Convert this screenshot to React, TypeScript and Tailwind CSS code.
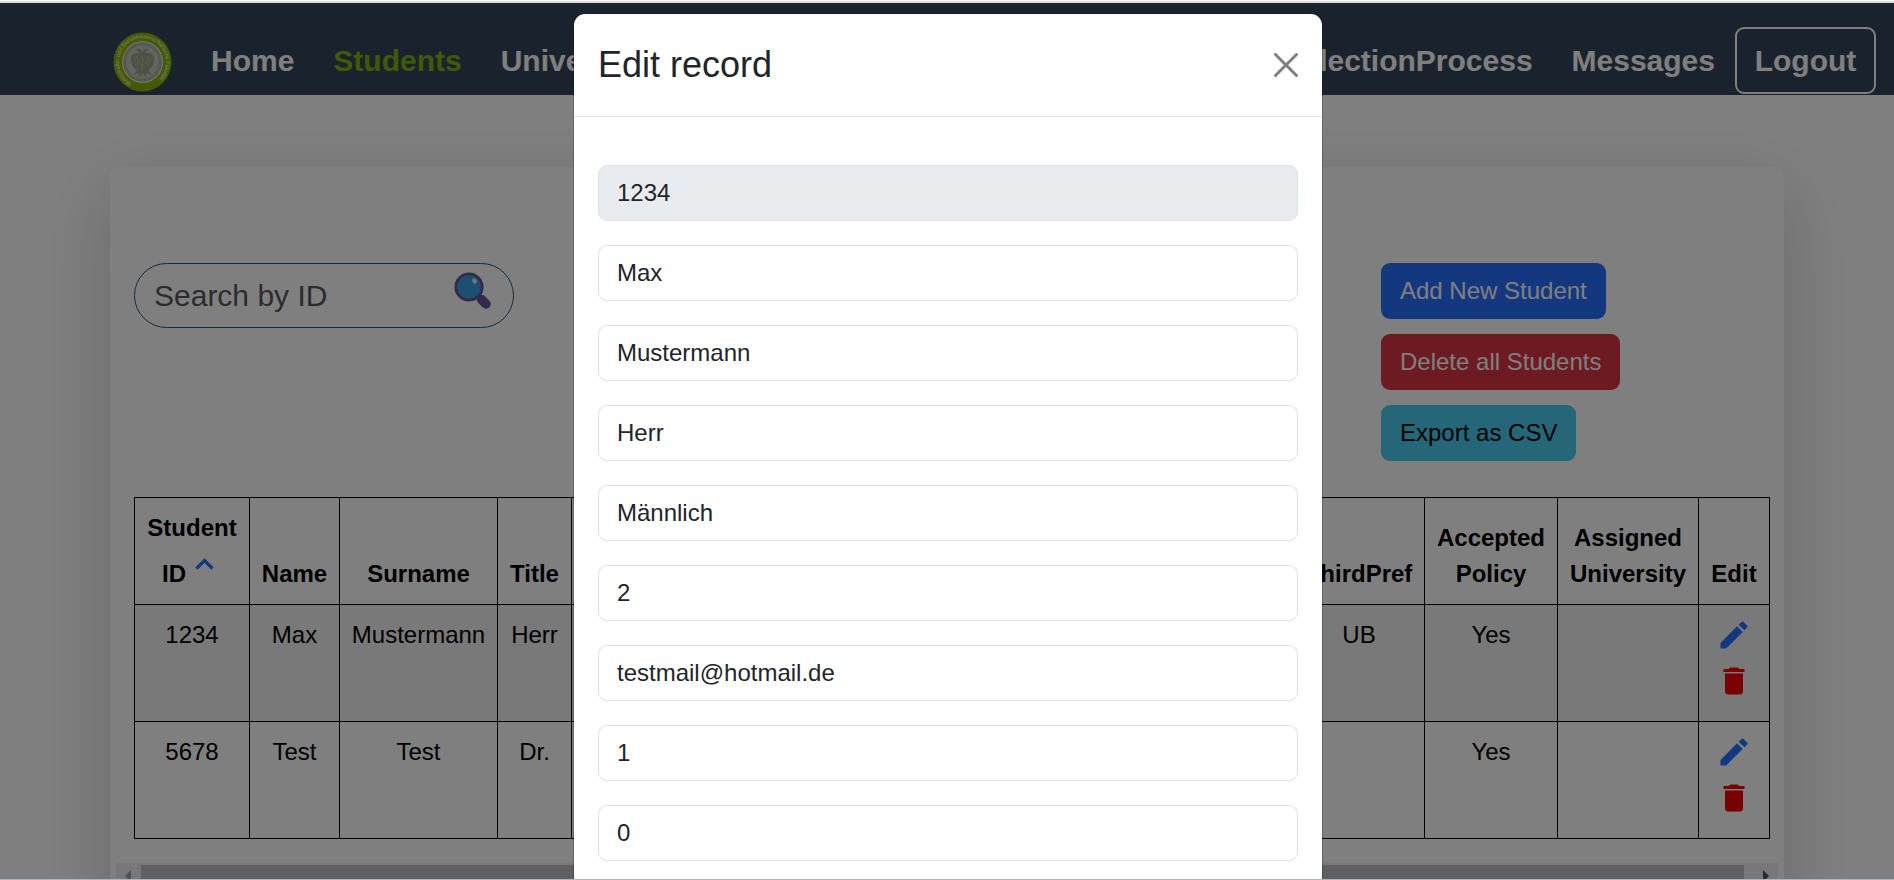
import { MdEdit, MdDelete } from "react-icons/md";

const fields = ["1234", "Max", "Mustermann", "Herr", "Männlich", "2", "testmail@hotmail.de", "1", "0"];

const columns = [
  { label: ["Student", "ID"], width: "w-[115px]" },
  { label: ["Name"], width: "w-[90px]" },
  { label: ["Surname"], width: "w-[158px]" },
  { label: ["Title"], width: "w-[74px]" },
  { label: ["Gender"], width: "w-[122px]" },
  { label: ["Semester"], width: "w-[140px]" },
  { label: ["Email"], width: "w-[240px]" },
  { label: ["FirstPref"], width: "w-[106px]" },
  { label: ["SecondPref"], width: "w-[114px]" },
  { label: ["ThirdPref"], width: "w-[131px]" },
  { label: ["Accepted", "Policy"], width: "w-[133px]" },
  { label: ["Assigned", "University"], width: "w-[141px]" },
  { label: ["Edit"], width: "w-[71px]" },
];

const rows = [
  ["1234", "Max", "Mustermann", "Herr", "", "", "", "", "", "UB", "Yes", ""],
  ["5678", "Test", "Test", "Dr.", "", "", "", "", "", "", "Yes", ""],
];

function Logo() {
  return (
    <svg className="mt-[29px] h-[60px] w-[59px] shrink-0" viewBox="0 0 60 60" preserveAspectRatio="none">
      <circle cx="30" cy="30" r="29.5" fill="#8ab400" />
      <circle cx="30" cy="30" r="21" fill="#e0e8d0" />
      <circle cx="30" cy="30" r="19.8" fill="#a9b3a2" />
      <circle cx="30" cy="30" r="16.5" fill="#c3cabc" />
      <path
        d="M30 20c-2-4-6-4-7-1 2-1 4 0 4 2-4-1-8 1-9 4 0 6 2 11 6 13l-3 5 5-2 1 4 3-4 3 4 1-4 5 2-3-5c4-2 6-7 6-13-1-3-5-5-9-4 0-2 2-3 4-2-1-3-5-3-7 1z"
        fill="#98a48c"
      />
      <path d="M21 25l4 8M24 24l3 8M39 25l-4 8M36 24l-3 8M30 24v14" stroke="#b8c2ae" strokeWidth="1" />
      <path id="ring" d="M18 51.900A25 25 0 1 1 42 51.900" transform="translate(1.500 1.500) scale(0.95)" fill="none" />
      <text fontSize="5.800" fontWeight="bold" fill="#dfe8c4" fontFamily="Liberation Sans, sans-serif">
        <textPath href="#ring" textLength="118" lengthAdjust="spacingAndGlyphs">
          Wirtschafts- und Sozialwissenschaftliche Fakultät
        </textPath>
      </text>
    </svg>
  );
}

function Navbar() {
  return (
    <nav className="flex h-[92px] bg-[#35465a] pr-[18px] pl-[113px] text-[30px] leading-[45px] font-bold text-white">
      <Logo />
      <div className="flex gap-[39px] pt-[35px] pl-[39px]">
        <span>Home</span>
        <span className="text-[#7cb40c]">Students</span>
        <span>Universities</span>
      </div>
      <div className="ml-auto flex pt-6">
        <div className="flex gap-[39px] pt-[11px] pr-[20px]">
          <span>SelectionProcess</span>
          <span>Messages</span>
        </div>
        <button className="h-[67px] w-[141px] rounded-[9px] border-2 border-white">Logout</button>
      </div>
    </nav>
  );
}

function SearchIcon() {
  return (
    <svg className="h-[38px] w-[38px]" viewBox="0 0 38 38">
      <path d="M27.500 27.500l4.500 4.500" stroke="#665596" strokeWidth="9.500" strokeLinecap="round" />
      <path d="M23 23l4 4" stroke="#665596" strokeWidth="4" />
      <circle cx="15" cy="15" r="13.2" fill="#3aa0e0" stroke="#665596" strokeWidth="2.8" />
      <ellipse cx="20.5" cy="9" rx="2.1" ry="2.7" fill="#ddeefa" transform="rotate(-25 20.5 9)" />
    </svg>
  );
}

function Toolbar() {
  return (
    <div className="flex h-[234px] items-start justify-between">
      <div className="flex h-[65px] w-[380px] items-start justify-between rounded-[33px] border border-[#35566a] pr-[21px] pl-[19px]">
        <span className="pt-[9px] text-[30px] leading-[45px] text-[#57595c]">Search by ID</span>
        <div className="pt-[8px]">
          <SearchIcon />
        </div>
      </div>
      <div className="flex w-[379px] flex-col items-start gap-[15px]">
        <button className="h-14 rounded-[9px] bg-[#2670ff] px-[19px] text-white">Add New Student</button>
        <button className="h-14 rounded-[9px] bg-[#dc3545] px-[19px] text-white">Delete all Students</button>
        <button className="h-14 rounded-[9px] bg-[#4acdf0] px-[19px] text-black">Export as CSV</button>
      </div>
    </div>
  );
}

function StudentTable() {
  return (
    <table className="w-[1636px] table-fixed border-collapse text-center text-black">
      <thead>
        <tr className="h-[107px]">
          {columns.map((c, i) => (
            <th key={c.label[0]} className={"border border-black pb-3 align-bottom leading-9 " + c.width}>
              {i === 0 ? (
                <>
                  <div className="leading-9">Student</div>
                  <div className="flex h-[46px] items-start justify-center gap-[9px] pr-[8px]">
                    <span className="pt-[10px]">ID</span>
                    <svg className="mt-[12px] h-[12px] w-[19px]" viewBox="0 0 19 12">
                      <path d="M1.5 10.5L9.5 2.5L17.5 10.5" fill="none" stroke="#2670ff" strokeWidth="3.2" />
                    </svg>
                  </div>
                </>
              ) : (
                c.label.map((l) => <div key={l}>{l}</div>)
              )}
            </th>
          ))}
        </tr>
      </thead>
      <tbody>
        {rows.map((r, ri) => (
          <tr key={r[0]} className={ri === 0 ? "h-[117px] bg-[#f2f2f2]" : "h-[117px]"}>
            {r.map((v, i) => (
              <td key={i} className="border border-black pt-3 align-top leading-9">
                {v}
              </td>
            ))}
            <td className="border border-black pt-3 align-top">
              <div className="flex flex-col items-center gap-[10px]">
                <MdEdit className="size-9 text-[#2670ff]" />
                <MdDelete className="size-9 text-[#f00000]" />
              </div>
            </td>
          </tr>
        ))}
      </tbody>
    </table>
  );
}

function ScrollBar() {
  return (
    <div className="mt-6 flex h-[25px] w-[1662px] items-start bg-[#f1f1f1] pt-[2px]">
      <svg className="h-[22px] w-[25px]" viewBox="0 0 25 22">
        <path d="M15 5v12l-6-6z" fill="#a3a3a3" />
      </svg>
      <div className="h-[22px] w-[1603px] bg-[#c1c1c1]" />
      <svg className="h-[22px] w-[34px]" viewBox="0 0 34 22">
        <path d="M19 5v12l6-6z" fill="#505050" />
      </svg>
    </div>
  );
}

function Modal() {
  return (
    <div className="h-[900px] w-[750px] rounded-[12px] border border-black/20 bg-white bg-clip-padding text-[#212529]">
      <div className="flex h-[103px] items-center justify-between border-b border-[#dee2e6] px-6">
        <h1 className="text-[36px] leading-[54px]">Edit record</h1>
        <svg className="h-6 w-6" viewBox="0 0 16 16" fill="#808080">
          <path d="M.293.293a1 1 0 0 1 1.414 0L8 6.586 14.293.293a1 1 0 1 1 1.414 1.414L9.414 8l6.293 6.293a1 1 0 0 1-1.414 1.414L8 9.414l-6.293 6.293a1 1 0 0 1-1.414-1.414L6.586 8 .293 1.707a1 1 0 0 1 0-1.414z" />
        </svg>
      </div>
      <div className="flex flex-col gap-6 px-6 pt-12">
        {fields.map((f, i) => (
          <div
            key={f}
            className={
              i === 0
                ? "h-14 rounded-[9px] border border-[#dee2e6] bg-[#e9ecef] px-[18px] leading-[54px]"
                : "h-14 rounded-[9px] border border-[#dee2e6] bg-white px-[18px] leading-[54px]"
            }
          >
            {f}
          </div>
        ))}
      </div>
    </div>
  );
}

export default function App() {
  return (
    <div className="relative h-[880px] w-[1894px] overflow-hidden bg-white font-['Liberation_Sans',Arial,sans-serif] text-[24px]">
      <div className="mt-px h-[2px] bg-[#dedede]" />
      <Navbar />
      <main className="px-[110px] pt-[72px]">
        <section className="h-[900px] rounded-[9px] bg-white pt-24 shadow-[0_24px_72px_rgba(0,0,0,0.175)]">
          <div className="px-6">
            <Toolbar />
            <StudentTable />
          </div>
          <div className="pl-[6px]">
            <ScrollBar />
          </div>
        </section>
      </main>
      <div className="absolute inset-x-0 top-[3px] bottom-0 flex justify-center bg-black/50 pt-[10px] pl-[2px]">
        <Modal />
      </div>
      <div className="absolute inset-x-0 bottom-0 h-px bg-[#b0b5c4]" />
    </div>
  );
}
